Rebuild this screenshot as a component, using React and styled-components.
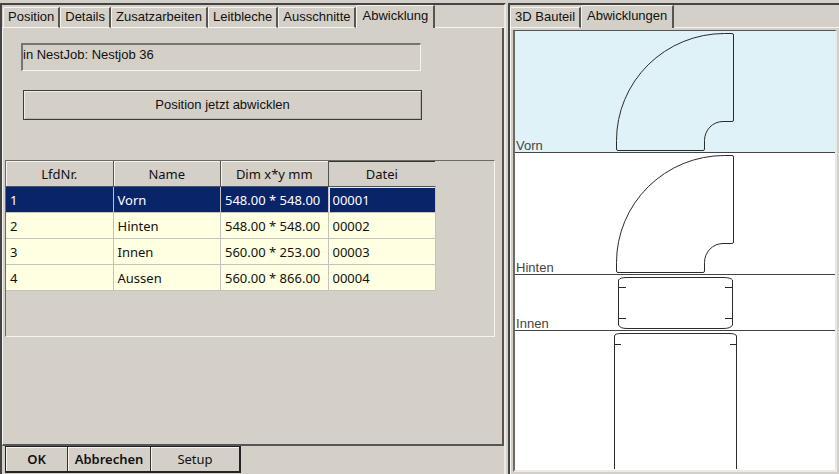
import { useState } from 'react';
import styled, { createGlobalStyle } from 'styled-components';

const GlobalStyle = createGlobalStyle`
    * {
        box-sizing: border-box;
    }

    body {
        margin: 0;
        background-color: #d4d0c8;
        color: #111;
        font-family: "Liberation Sans", Arial, sans-serif;
        font-size: 13px;
    }

    button, input {
        font: inherit;
        color: inherit;
    }
`;

const Window = styled.div`
    display: grid;
    grid-template-columns: minmax(0, 52fr) minmax(0, 34fr);
    column-gap: 2px;
    min-height: 100vh;
    padding-top: 3px;
`;

const Pane = styled.section`
    display: flex;
    flex-direction: column;
    min-width: 0;
    border-style: solid;
    border-width: 2px 0 0 2px;
    border-color: #444;
`;

const LeftPane = styled(Pane)`
    border-right: 2px solid #eceae5;
`;

const TabBar = styled.div`
    display: flex;
    align-items: flex-end;
    height: 23px;
    padding-left: ${({ $indent }) => $indent || 0}px;
    box-shadow: inset 0 -1px #f5f4f0;
`;

const Tab = styled.button`
    height: ${({ $active }) => ($active ? 23 : 21)}px;
    padding: ${({ $active }) => ($active ? '0 5px 2px' : '0 4px 1px')};
    border-style: solid;
    border-color: #f5f4f0 #555 #f5f4f0 #f5f4f0;
    border-width: 1px 2px ${({ $active }) => ($active ? 0 : 1)}px 1px;
    border-top-left-radius: 2px;
    background-color: #d4d0c8;
    line-height: 18px;
    white-space: nowrap;
`;

const TabPage = styled.div`
    flex: 1;
    display: flex;
    flex-direction: column;
    border-style: solid;
    border-width: 0 2px 2px 1px;
    border-color: #555 #555 #555 #f5f4f0;
`;

const JobField = styled.input`
    height: 28px;
    margin: 15px 81px 0 18px;
    padding: 0 1px 6px 0;
    border: 2px solid;
    border-width: 2px 1px 1px 2px;
    border-color: #77746f #f5f4f0 #f5f4f0 #77746f;
    border-radius: 0;
    background-color: transparent;
    outline: none;
`;

const UnfoldButton = styled.button`
    height: 30px;
    margin: 19px 80px 0 20px;
    padding: 0 0 2px;
    border: 1px solid #3c3c3c;
    background-color: #d4d0c8;
    box-shadow: inset 1px 1px #efede8, inset -1px -1px #b9b6af;
`;

const TablePanel = styled.div`
    height: 177px;
    margin: 40px 7px 0 2px;
    border: 1px solid;
    border-color: #6c6a66 #f5f4f0 #f5f4f0 #6c6a66;
    font-family: "Noto Sans", Tahoma, sans-serif;
`;

const PartTable = styled.table`
    width: 430px;
    table-layout: fixed;
    border-collapse: separate;
    border-spacing: 0;
`;

const HeadCell = styled.th`
    height: 26px;
    padding: 0;
    border-right: 1px solid #55534f;
    border-bottom: 1px solid #55534f;
    box-shadow: inset 1px 1px #f5f4f0;
    font-weight: normal;

    &:last-child {
        border-right-color: transparent;
        box-shadow: inset 0 1px #333;
    }
`;

const Cell = styled.td`
    height: 26px;
    padding: 0 0 0 4px;
    border-right: 1px solid #c4c2c0;
    border-bottom: 1px solid #c4c2c0;
    background-color: #ffffe1;
    line-height: 18px;
    white-space: nowrap;
`;

const Row = styled.tr`
    ${Cell} {
        ${({ $selected }) => $selected && `
            background-color: #0a246a;
            color: white;
        `}
    }

    ${Cell}:last-child {
        ${({ $selected }) => $selected && 'box-shadow: inset 0 1px #e8e8f0, inset 1px 0 #e8e8f0;'}
    }
`;

const ButtonBar = styled.div`
    align-self: flex-start;
    display: flex;
    margin: 0 0 1px 3px;
    border: 1px solid #222;
    border-width: 1px 2px 2px 1px;
    font-family: "Noto Sans", Tahoma, sans-serif;
`;

const BarButton = styled.button`
    width: ${({ $width }) => $width}px;
    height: 24px;
    padding: 0;
    border: none;
    border-right: 1px solid #333;
    background-color: #d4d0c8;
    box-shadow: inset 1px 1px #f5f4f0;
    font-weight: ${({ $strong }) => ($strong ? 600 : 400)};
    line-height: 18px;

    &:last-child {
        border-right: none;
    }
`;

const ViewPage = styled.div`
    flex: 1;
    display: flex;
    padding: 2px;
    border-left: 1px solid #f5f4f0;
`;

const Canvas = styled.div`
    flex: 1;
    display: flex;
    flex-direction: column;
    min-width: 0;
    border: 2px solid;
    border-width: 1px 2px 2px 2px;
    border-color: #555 #eceae5 #eceae5 #6c6a66;
    background-color: white;
`;

const Sheet = styled.div`
    position: relative;
    flex: ${({ $last }) => ($last ? 1 : 'none')};
    display: flex;
    justify-content: center;
    border-bottom: ${({ $last }) => ($last ? 'none' : '1px solid #444')};
    background-color: ${({ $selected }) => ($selected ? '#dff2f8' : 'white')};
`;

const SheetLabel = styled.span`
    position: absolute;
    left: 1px;
    bottom: 0;
    line-height: 12px;
    color: #444;
`;

const Outline = styled.svg`
    display: block;
    fill: none;
    stroke: #2b2b2b;
    stroke-width: 1;
`;

const parts = [
  { nr: 1, name: 'Vorn', dim: '548.00 * 548.00', file: '00001' },
  { nr: 2, name: 'Hinten', dim: '548.00 * 548.00', file: '00002' },
  { nr: 3, name: 'Innen', dim: '560.00 * 253.00', file: '00003' },
  { nr: 4, name: 'Aussen', dim: '560.00 * 866.00', file: '00004' },
];

const positionTabs = ['Position', 'Details', 'Zusatzarbeiten', 'Leitbleche', 'Ausschnitte', 'Abwicklung'];
const viewTabs = ['3D Bauteil', 'Abwicklungen'];

function Tabs({ names, label, indent, initial }) {
  const [active, setActive] = useState(initial);

  return (
    <TabBar role="tablist" aria-label={label} $indent={indent}>
      {names.map((name) => (
        <Tab
          key={name}
          type="button"
          role="tab"
          aria-selected={name === active}
          $active={name === active}
          onClick={() => setActive(name)}
        >
          {name}
        </Tab>
      ))}
    </TabBar>
  );
}

function Elbow() {
  return (
    <Outline width="120" height="121" viewBox="0 0 120 121">
      <path d="M1.5 109.5A108 107 0 0 1 109.5 2.5H117Q118.5 2.5 118.5 4V89Q118.5 90.5 117 90.5H108A18.5 19 0 0 0 89.5 109.5V118Q89.5 119.5 88 119.5H3Q1.5 119.5 1.5 118Z" />
    </Outline>
  );
}

function InnerStrip() {
  return (
    <Outline width="120" height="55" viewBox="0 0 120 55">
      <path d="M3.5 5Q5 2.5 12 2.5H108Q116 2.5 117.5 5V50Q116 53.5 108 53.5H12Q5 53.5 3.5 50Z" />
      <path d="M3.5 12.5H11M110 12.5H117.5M3.5 43.5H11M110 43.5H117.5" />
    </Outline>
  );
}

function OuterStrip() {
  return (
    <Outline width="124" height="138" viewBox="0 0 124 138">
      <path d="M1.5 138V5Q2 2.5 8 2.5H116Q123 2.5 123.5 5V138" />
      <path d="M1.5 13.5H8M117 13.5H123.5" />
    </Outline>
  );
}

function PartList() {
  const [selected, setSelected] = useState(1);

  return (
    <TablePanel>
      <PartTable>
        <thead>
          <tr>
            <HeadCell>LfdNr.</HeadCell>
            <HeadCell>Name</HeadCell>
            <HeadCell>Dim x*y mm</HeadCell>
            <HeadCell>Datei</HeadCell>
          </tr>
        </thead>
        <tbody>
          {parts.map(({ nr, name, dim, file }) => (
            <Row key={nr} $selected={nr === selected} onClick={() => setSelected(nr)}>
              <Cell>{nr}</Cell>
              <Cell>{name}</Cell>
              <Cell>{dim}</Cell>
              <Cell>{file}</Cell>
            </Row>
          ))}
        </tbody>
      </PartTable>
    </TablePanel>
  );
}

function App() {
  return (
    <>
      <GlobalStyle />
      <Window>
        <LeftPane>
          <Tabs names={positionTabs} label="Position" indent={1} initial="Abwicklung" />
          <TabPage>
            <JobField aria-label="NestJob" readOnly value="in NestJob: Nestjob 36" />
            <UnfoldButton type="button">Position jetzt abwicklen</UnfoldButton>
            <PartList />
          </TabPage>
          <ButtonBar>
            <BarButton type="button" $width={62} $strong>OK</BarButton>
            <BarButton type="button" $width={83} $strong>Abbrechen</BarButton>
            <BarButton type="button" $width={88}>Setup</BarButton>
          </ButtonBar>
        </LeftPane>
        <Pane>
          <Tabs names={viewTabs} label="Ansicht" initial="Abwicklungen" />
          <ViewPage>
            <Canvas>
              <Sheet $selected>
                <Elbow />
                <SheetLabel>Vorn</SheetLabel>
              </Sheet>
              <Sheet>
                <Elbow />
                <SheetLabel>Hinten</SheetLabel>
              </Sheet>
              <Sheet>
                <InnerStrip />
                <SheetLabel>Innen</SheetLabel>
              </Sheet>
              <Sheet $last>
                <OuterStrip />
              </Sheet>
            </Canvas>
          </ViewPage>
        </Pane>
      </Window>
    </>
  );
}

export default App;
